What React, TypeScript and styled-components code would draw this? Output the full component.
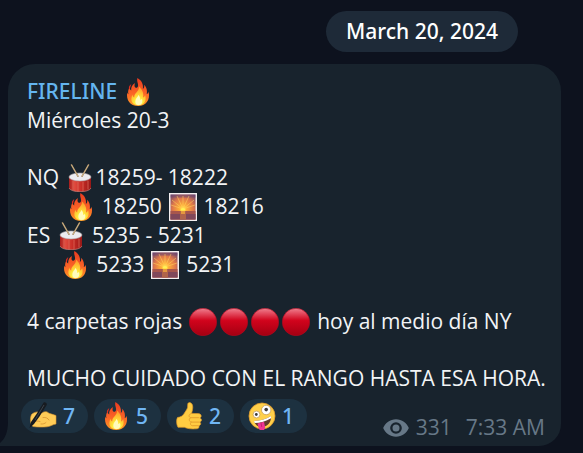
import React from "react";
import styled, { createGlobalStyle } from "styled-components";

const GlobalStyle = createGlobalStyle`
  * { box-sizing: border-box; }
  body {
    margin: 0;
    background: #0d121e;
    font-family: "Open Sans", "Noto Sans", sans-serif;
  }
`;

const Chat = styled.main`
  display: flex;
  flex-direction: column;
  gap: 12px;
  padding: 11px 22px 7px 8px;
`;

const DateBadge = styled.time`
  align-self: flex-end;
  margin-right: 43px;
  padding: 0 20px;
  border-radius: 21px;
  background: #1e2a38;
  color: #fff;
  font-family: "Noto Sans", sans-serif;
  font-size: 21px;
  font-weight: 500;
  line-height: 41px;
`;

const Bubble = styled.article`
  position: relative;
  padding: 13px 16px 4px 19px;
  border-radius: 27px 27px 22px 0;
  background: #18232d;
  color: #f2f4f6;
`;

const Tail = styled.svg`
  position: absolute;
  left: -8px;
  bottom: 0;
  width: 8px;
  height: 24px;
`;

const Sender = styled.h1`
  margin: 0;
  color: #64b5ef;
  font-family: "Noto Sans", sans-serif;
  font-size: 21px;
  font-weight: 500;
  line-height: 29px;
  white-space: pre;
`;

const Line = styled.p`
  margin: 0;
  font-size: 21px;
  line-height: 29px;
  white-space: pre;
`;

const Gap = styled.div`
  height: 28px;
`;

const Emoji = styled.span`
  display: inline-flex;
  justify-content: center;
  align-items: center;
  width: 31px;
  height: 28px;
  vertical-align: bottom;

  svg { width: 28px; height: 28px; }
`;

const Footer = styled.footer`
  display: flex;
  justify-content: space-between;
  align-items: flex-start;
  margin: 6px 0 0 -6px;
`;

const Reactions = styled.div`
  display: flex;
  gap: 6px;
`;

const Reaction = styled.button`
  display: flex;
  align-items: center;
  justify-content: space-between;
  width: 67px;
  height: 34px;
  padding: 0 13px 0 8px;
  border: 0;
  border-radius: 17px;
  background: #1d3140;
  color: #70b6f4;
  font: 500 21px/34px "Noto Sans", sans-serif;

  svg { width: 28px; height: 28px; }
`;

const Meta = styled.div`
  display: flex;
  align-items: center;
  margin-top: 14px;
  color: #677887;
  font-size: 21px;
  line-height: 29px;
`;

const Views = styled.span`
  display: flex;
  align-items: center;
  gap: 6px;
  margin-right: 14px;

  svg { width: 28px; height: 28px; }
`;

function Fire({ id }: { id: string }) {
  return (
    <svg viewBox="0 0 28 28" role="img" aria-label="fire">
      <defs>
        <linearGradient id={id + "a"} x1="0" y1="0" x2="0" y2="1">
          <stop offset="0" stopColor="#e93a20" />
          <stop offset=".55" stopColor="#fa6426" />
          <stop offset="1" stopColor="#ff9a25" />
        </linearGradient>
        <radialGradient id={id + "b"} cx=".5" cy=".9" r=".8">
          <stop offset="0" stopColor="#fffbb2" />
          <stop offset=".35" stopColor="#ffed3c" />
          <stop offset="1" stopColor="#ff9f2b" />
        </radialGradient>
      </defs>
      <g transform="translate(1.400 0) scale(.92 1)">
        <path fill={"url(#" + id + "a)"} d="M13 0c-.8 3 .6 4.700 .8 7 .2 2.200-1.500 3.400-3 2.600-1.600-1-.7-3.500-.3-4.600C7.200 6.500 6 9.500 6.300 12.500 4.900 11.800 4.500 10.500 4.800 9 2.800 11.600 2.700 14 3.300 16.200c-.6-.3-1-1-1.200-1.800C.4 21.500 5 28 14 28c8 0 13.400-5.700 11.200-14.200-.3 1.200-1 2-2 2.300 1-4.500-1-7.600-2.800-9.300.3 2.100-.2 3.600-1.400 4.100C19.800 6 17.400 2.200 13 0z" />
        <path fill="#e52c20" d="M6.500 6C3.900 7.500 3.400 9.200 4 11.500 5.700 10.400 5.100 8.200 6.500 6z" />
        <path fill={"url(#" + id + "b)"} d="M14.800 8.500c.4 5.500-5.500 6-5.200 11-1.300-.6-1.800-1.700-1.700-3-3.700 6.300.2 10.700 6 10.700 6.500 0 9.600-4.700 7.500-10.200-.5 1.500-1.200 2.200-2.300 2.500 1.400-4.600-1.300-8.500-4.300-11z" />
        <path fill="#fffbbd" d="M14.200 17c-1 2.700-3.400 3.500-3.400 6.300 0 2.500 1.600 3.700 3.600 3.700 3.500 0 4.900-2.900 3.500-6.200-.5.800-1.100 1.200-1.800 1.300.2-2-.6-3.900-1.900-5.100z" />
      </g>
    </svg>
  );
}

function Drum({ id }: { id: string }) {
  return (
    <svg viewBox="0 0 28 28" role="img" aria-label="drum">
      <defs>
        <linearGradient id={id}>
          <stop offset="0" stopColor="#a51d1c" />
          <stop offset=".25" stopColor="#e04a3e" />
          <stop offset=".6" stopColor="#c62b25" />
          <stop offset="1" stopColor="#961817" />
        </linearGradient>
      </defs>
      <path fill={"url(#" + id + ")"} d="M3 12.500V24c2 5 20 5 22 0V12.500z" />
      <path fill="none" stroke="#c98d85" strokeWidth=".6" d="M3 24c2 5 20 5 22 0" />
      <path stroke="#e0705f" strokeWidth=".7" d="M7 17v9m5-8v9.500m5-9.500v9.500m5-11v9" />
      <ellipse cx="14" cy="13" rx="11" ry="4" fill="#ececf0" stroke="#aaa6a9" strokeWidth=".6" />
      <path stroke="#a08562" strokeWidth="1.500" strokeLinecap="round" d="M5.500.8l6.500 11.500M22.500.8L16 12.300" />
      <path stroke="#e6cb96" strokeWidth=".6" d="M5.500.8l6.500 11.500M22.500.8L16 12.300" />
    </svg>
  );
}

function Sunrise({ id }: { id: string }) {
  return (
    <svg viewBox="0 0 28 28" role="img" aria-label="sunrise">
      <defs>
        <radialGradient id={id} cx=".5" cy=".57" r=".7">
          <stop offset="0" stopColor="#ffef49" />
          <stop offset=".2" stopColor="#ffb038" />
          <stop offset=".6" stopColor="#e0784a" />
          <stop offset="1" stopColor="#74486b" />
        </radialGradient>
      </defs>
      <path fill="#f4eff0" d="M0 0h28v28H0z" />
      <path fill={"url(#" + id + ")"} d="M1.500 1.500h25v25h-25z" />
      <path fill="#6e486f" opacity=".5" d="M1.500 1.500h25v3h-25z" />
      <path stroke="#ffd060" strokeWidth=".8" opacity=".7" d="M14 16V3M14 16L8 3M14 16L20 3M14 16L3 7M14 16L25 7M14 16L2 12M14 16L26 12" />
      <path fill="#a8564c" d="M1.500 18h25v8.500h-25z" />
      <path fill="#80485a" d="M1.500 21h25v5.500h-25z" />
      <path fill="#b0644b" d="M11 18h6v8.500h-6z" />
      <path fill="#e5983f" d="M12 18h4v3h-4z" />
      <path fill="#fff254" d="M11.500 17.500a2.500 2.500 0 0 1 5 0z" />
    </svg>
  );
}

function RedCircle({ id }: { id: string }) {
  return (
    <svg viewBox="0 0 28 28" role="img" aria-label="red circle">
      <defs>
        <linearGradient id={id} x1="0" y1="0" x2="0" y2="1">
          <stop offset="0" stopColor="#ed8190" />
          <stop offset=".15" stopColor="#e65568" />
          <stop offset=".36" stopColor="#d61b32" />
          <stop offset=".45" stopColor="#d1031c" />
          <stop offset="1" stopColor="#a30012" />
        </linearGradient>
      </defs>
      <circle cx="14" cy="14" r="13.700" fill={"url(#" + id + ")"} stroke="#b00820" strokeWidth=".6" />
    </svg>
  );
}

function Writing() {
  return (
    <svg viewBox="0 0 28 28" role="img" aria-label="writing hand">
      <path fill="#ffcc57" stroke="#d9942f" strokeWidth=".6" d="M2.500 12.500C5 10 9 9 13 11c2.500-2 5.500-1.500 7 .3 2.500.6 4.500 1.500 7 2.200V22c-3.500.5-5.500 2.500-9 2.800-5 .5-9.500.4-14-.3C1.500 23 .5 17 2.500 12.500z" />
      <path fill="none" stroke="#dc9a35" strokeWidth=".9" strokeLinecap="round" d="M6 19.500c2-.6 3-.6 5 0M14 15.500c3-.5 5 .8 6 2.500M12 22c2 .2 4-.4 5-1.500" />
      <path fill="#171b20" d="M14.500.8c1-1.300 4 .3 3.200 2.200L10.500 14.500 5 22l-4.500 4L2 20l5.500-8z" />
      <path stroke="#56606a" strokeWidth=".6" d="M15 3L6 18" />
    </svg>
  );
}

function ThumbsUp() {
  return (
    <svg viewBox="0 0 28 28" role="img" aria-label="thumbs up">
      <path fill="#ffcc42" stroke="#dc9829" strokeWidth=".7" d="M2.500 15.500c3-.3 5.300-1.500 7-4.500 2-3.400 3.400-4 3.200-8.200-.1-3.500 4-2.700 4.800.4.700 2.700-.2 5.800-1 8.200l6.700.2c3.600.2 3.700 3.700 1.600 4.300 2.400 1 2.200 3.500-.1 4.200 1.700 1 1.100 3.300-.9 3.600.8 1.800-.2 3-2.500 3.100-5.300.4-8.800-.2-11.900-1.500H3C1.300 22.500 1.200 17.500 2.500 15.500z" />
      <path fill="none" stroke="#e5a12d" strokeWidth="1" strokeLinecap="round" d="M16.300 11.500c-2.600.4-3 3.300-.8 4.200h8M15.500 15.700c-2 1-1.500 3.800.7 4.400h7.600m-7.600 0c-1.600 1.200-.8 3.200 1 3.600h6" />
    </svg>
  );
}

function Zany() {
  return (
    <svg viewBox="0 0 28 28" role="img" aria-label="zany face">
      <circle cx="14" cy="14" r="13" fill="#ffd04a" stroke="#df9b2c" strokeWidth=".8" />
      <circle cx="18.200" cy="8" r="4.700" fill="#fff" stroke="#be9452" strokeWidth=".7" />
      <circle cx="8.500" cy="12.500" r="3.400" fill="#fff" stroke="#be9452" strokeWidth=".7" />
      <circle cx="18.200" cy="7.600" r="1.800" fill="#3e3b3c" />
      <circle cx="8.300" cy="12.500" r="1.400" fill="#3e3b3c" />
      <path fill="#633b2c" d="M6 19c7-.2 12.500-2 17-5 .5 6.200-3.200 10.200-8 11C10.500 25.700 7.300 23 6 19z" />
      <path fill="#fff" d="M6 19c7-.2 12.500-2 17-5v2.300C18 19.300 12.400 21 6.700 21z" />
      <path fill="#ef3593" d="M9.500 21.500l6.500-1.700 1 5c.7 4.600-5.600 5.400-6.400 1z" />
      <path stroke="#b71c68" strokeWidth=".8" d="M13 21l.8 4" />
    </svg>
  );
}

function Eye() {
  return (
    <svg viewBox="0 0 24 24" fill="currentColor" role="img" aria-label="views">
      <path d="M12 4.500C7 4.500 2.730 7.610 1 12c1.730 4.390 6 7.500 11 7.500s9.270-3.110 11-7.500c-1.730-4.390-6-7.500-11-7.500zM12 17a5 5 0 1 1 0-10 5 5 0 0 1 0 10zm0-8a3 3 0 1 0 0 6 3 3 0 0 0 0-6z" />
    </svg>
  );
}

const reactions = [
  { icon: <Writing />, count: 7 },
  { icon: <Fire id="reaction" />, count: 5 },
  { icon: <ThumbsUp />, count: 2 },
  { icon: <Zany />, count: 1 },
];

export default function App() {
  return (
    <>
      <GlobalStyle />
      <Chat>
        <DateBadge dateTime="2024-03-20">March 20, 2024</DateBadge>
        <Bubble>
          <Sender>FIRELINE <Emoji><Fire id="sender" /></Emoji></Sender>
          <Line>Miércoles 20-3</Line>
          <Gap />
          <Line>NQ <Emoji><Drum id="nqDrum" /></Emoji>18259- 18222</Line>
          <Line>{"       "}<Emoji><Fire id="nqFire" /></Emoji> 18250 <Emoji><Sunrise id="nqSun" /></Emoji> 18216</Line>
          <Line>ES <Emoji><Drum id="esDrum" /></Emoji> 5235 - 5231</Line>
          <Line>{"      "}<Emoji><Fire id="esFire" /></Emoji> 5233 <Emoji><Sunrise id="esSun" /></Emoji> 5231</Line>
          <Gap />
          <Line>
            4 carpetas rojas{" "}
            {[1, 2, 3, 4].map((n) => (
              <Emoji key={n}><RedCircle id={"circle" + n} /></Emoji>
            ))}
            {" "}hoy al medio día NY
          </Line>
          <Gap />
          <Line>MUCHO CUIDADO CON EL RANGO HASTA ESA HORA.</Line>
          <Footer>
            <Reactions>
              {reactions.map(({ icon, count }) => (
                <Reaction key={count} type="button">{icon}<span>{count}</span></Reaction>
              ))}
            </Reactions>
            <Meta>
              <Views><Eye />331</Views>
              <time>7:33 AM</time>
            </Meta>
          </Footer>
          <Tail viewBox="0 0 8 24" aria-hidden="true">
            <path fill="#18232d" d="M8 0C8 10 5 17 0 21v3h8z" />
          </Tail>
        </Bubble>
      </Chat>
    </>
  );
}
